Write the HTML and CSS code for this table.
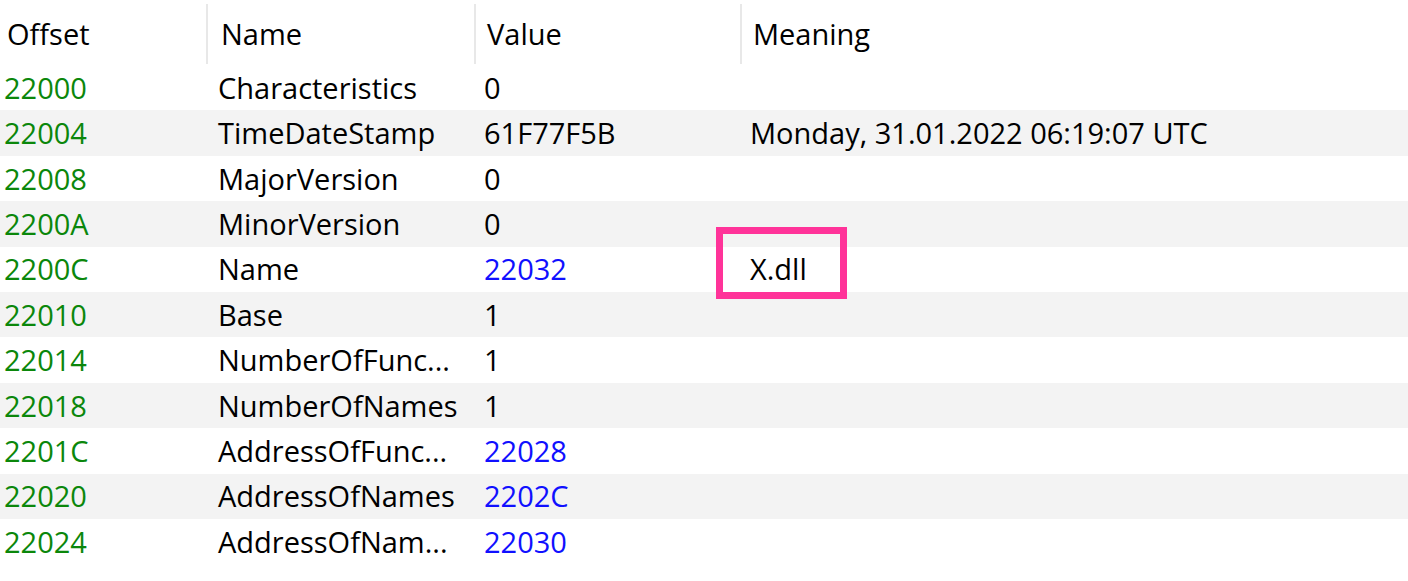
FILE: index.html
```html
<!DOCTYPE html>
<html lang="en">
<head>
    <meta charset="UTF-8">
    <title>Export Directory</title>
    <link rel="stylesheet" href="styles.css">
</head>
<body>
    <div class="list">
        <div class="row head">
            <div class="cell">Offset</div>
            <div class="cell">Name</div>
            <div class="cell">Value</div>
            <div class="cell">Meaning</div>
        </div>
        <div class="row">
            <div class="cell off">22000</div>
            <div class="cell">Characteristics</div>
            <div class="cell">0</div>
            <div class="cell"></div>
        </div>
        <div class="row">
            <div class="cell off">22004</div>
            <div class="cell">TimeDateStamp</div>
            <div class="cell">61F77F5B</div>
            <div class="cell">Monday, 31.01.2022 06:19:07 UTC</div>
        </div>
        <div class="row">
            <div class="cell off">22008</div>
            <div class="cell">MajorVersion</div>
            <div class="cell">0</div>
            <div class="cell"></div>
        </div>
        <div class="row">
            <div class="cell off">2200A</div>
            <div class="cell">MinorVersion</div>
            <div class="cell">0</div>
            <div class="cell"></div>
        </div>
        <div class="row">
            <div class="cell off">2200C</div>
            <div class="cell">Name</div>
            <div class="cell link">22032</div>
            <div class="cell"><span class="mark">X.dll</span></div>
        </div>
        <div class="row">
            <div class="cell off">22010</div>
            <div class="cell">Base</div>
            <div class="cell">1</div>
            <div class="cell"></div>
        </div>
        <div class="row">
            <div class="cell off">22014</div>
            <div class="cell">NumberOfFunc...</div>
            <div class="cell">1</div>
            <div class="cell"></div>
        </div>
        <div class="row">
            <div class="cell off">22018</div>
            <div class="cell">NumberOfNames</div>
            <div class="cell">1</div>
            <div class="cell"></div>
        </div>
        <div class="row">
            <div class="cell off">2201C</div>
            <div class="cell">AddressOfFunc...</div>
            <div class="cell link">22028</div>
            <div class="cell"></div>
        </div>
        <div class="row">
            <div class="cell off">22020</div>
            <div class="cell">AddressOfNames</div>
            <div class="cell link">2202C</div>
            <div class="cell"></div>
        </div>
        <div class="row">
            <div class="cell off">22024</div>
            <div class="cell">AddressOfNam...</div>
            <div class="cell link">22030</div>
            <div class="cell"></div>
        </div>
    </div>
</body>
</html>
```

FILE: styles.css
```css
body { margin: 0; background: #fff; font-family: "Open Sans", "Noto Sans", sans-serif; font-size: 29px; color: #000; }
.list { display: flex; flex-direction: column; }
.row { display: grid; grid-template-columns: 206px 268px 266px 1fr; height: 45.4px; align-items: center; }
.row:nth-child(odd) { background: #f3f3f3; }
.row.head { height: 65px; background: #fff; padding-bottom: 2px; box-sizing: border-box; }
.cell { padding-left: 10px; white-space: nowrap; line-height: 1.3; }
.row .cell:first-child { padding-left: 4px; }
.row .cell:nth-child(2) { padding-left: 12px; }
.head .cell { padding-left: 11px; height: 60px; line-height: 60px; border-left: 2px solid #e8e8e8; margin-top: 4px; }
.head .cell:first-child { padding-left: 7px; border-left: none; }
.head .cell:nth-child(2) { padding-left: 13px; }
.off { color: #0b870b; }
.link { color: #1010ff; }
.mark { position: relative; }
.mark::after { content: ""; position: absolute; left: -34px; right: -40px; top: -22px; bottom: -11px; border: 7px solid #ff3399; }
```
